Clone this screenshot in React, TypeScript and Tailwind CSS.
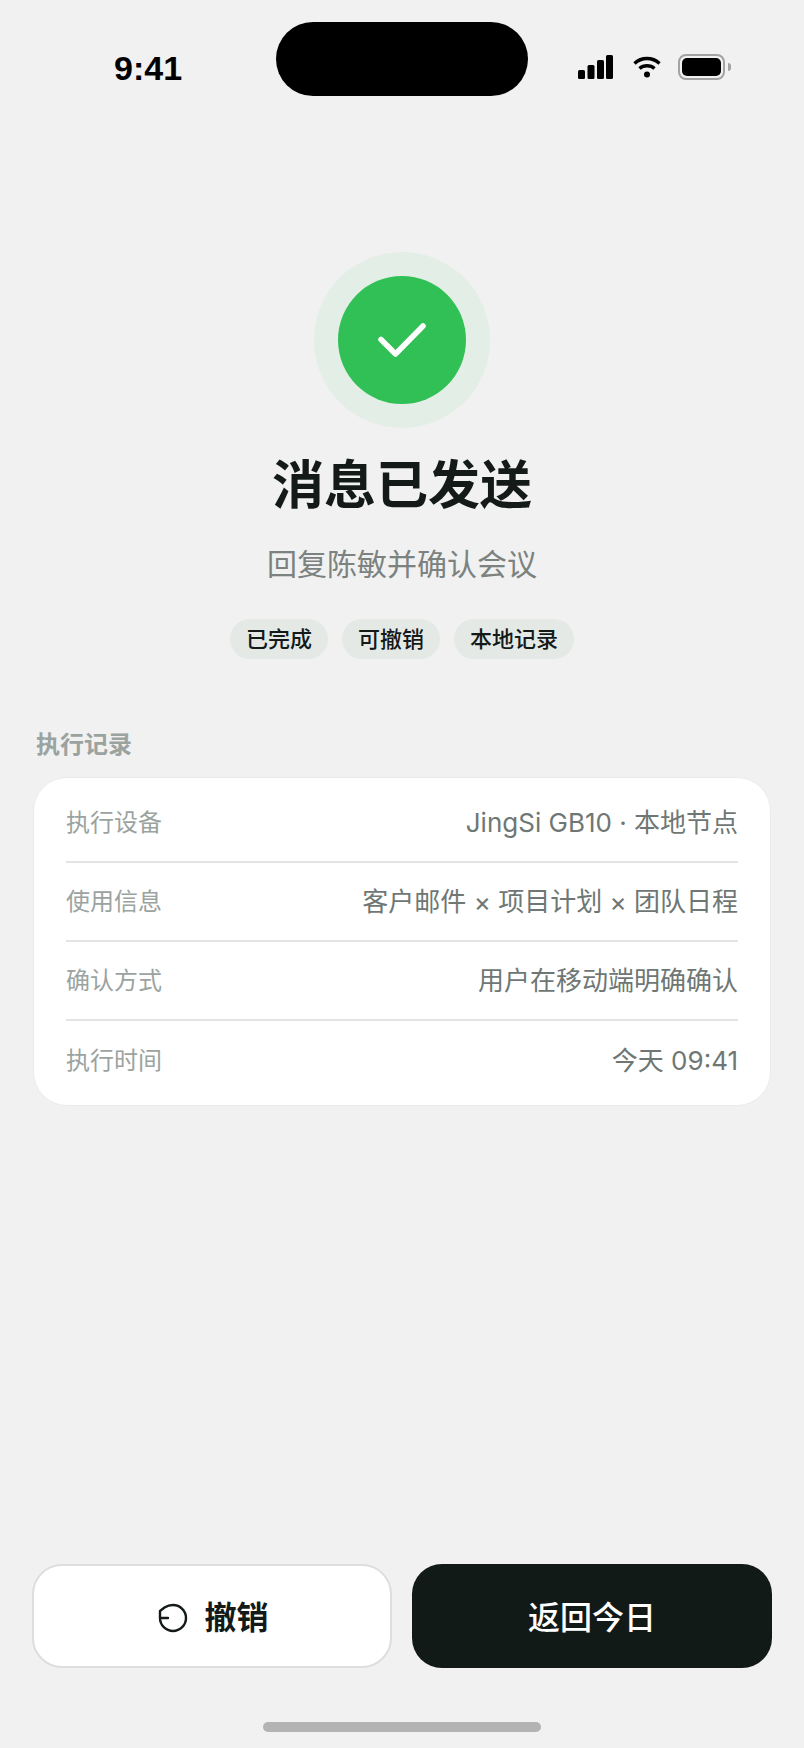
const FONT = "font-['Inter','Noto_Sans_CJK_SC',sans-serif]";

const rows = [
  { label: "执行设备", value: "JingSi GB10 · 本地节点" },
  { label: "使用信息", value: "客户邮件 × 项目计划 × 团队日程" },
  { label: "确认方式", value: "用户在移动端明确确认" },
  { label: "执行时间", value: "今天 09:41" },
];

function StatusIcons() {
  return (
    <div className="flex items-center">
      <svg width="35" height="24" viewBox="0 0 35 24" fill="#000">
        <rect x="0" y="15" width="7" height="9" rx="1.5" />
        <rect x="9.5" y="10" width="7" height="14" rx="1.5" />
        <rect x="19" y="5" width="7" height="19" rx="1.5" />
        <rect x="28" y="0" width="7" height="24" rx="1.5" />
      </svg>
      <svg className="ml-5" width="28" height="22" viewBox="0 0 28 22" fill="none" stroke="#000" strokeWidth="3.4">
        <path d="M1.5 7.5C8.5 .8 19.5 .8 26.5 7.5" />
        <path d="M6.5 12.5C10.5 8.8 17.5 8.8 21.5 12.5" />
        <circle cx="14" cy="18.5" r="3" fill="#000" stroke="none" />
      </svg>
      <div className="ml-[17px] flex items-center">
        <div className="flex h-[26px] w-[47px] rounded-[8px] border-2 border-[#a3a3a3] p-[2px]">
          <div className="flex-1 rounded-[5px] bg-black" />
        </div>
        <div className="ml-[3px] h-[8px] w-[3px] rounded-r-full bg-[#a3a3a3]" />
      </div>
    </div>
  );
}

function UndoIcon() {
  return (
    <svg width="30" height="30" viewBox="0 0 30 30" fill="none" stroke="#131a18" strokeWidth="2.4" strokeLinecap="round" strokeLinejoin="round">
      <path d="M2 15V8L6.5 4.5C9 2.9 12 2 15 2a13 13 0 1 1-13 13H10" />
    </svg>
  );
}

export default function App() {
  return (
    <div className={`${FONT} flex h-[1748px] w-[804px] flex-col overflow-hidden bg-[#f1f1f1] text-[#131a18]`}>
      <div className="flex h-[74px] mt-[22px] items-start">
        <div className="w-[276px] pl-[114px] pt-[26px] font-['Liberation_Sans',sans-serif] text-[34px] leading-[40px] font-bold text-black">9:41</div>
        <div className="h-[74px] w-[252px] rounded-[37px] bg-black" />
        <div className="pl-[50px] pt-[32px]">
          <StatusIcons />
        </div>
      </div>

      <div className="mt-[156px] flex flex-col items-center">
        <div className="flex h-[176px] w-[176px] items-center justify-center rounded-full bg-[#e3eee6]">
          <div className="flex h-[128px] w-[128px] items-center justify-center rounded-full bg-[#31c055]">
            <svg width="50" height="38" viewBox="0 0 50 38" fill="none" stroke="#fff" strokeWidth="5.5" strokeLinecap="round" strokeLinejoin="round">
              <path d="M4 18.5 18.5 33 46 5" />
            </svg>
          </div>
        </div>
        <h1 className="mt-[24px] text-[52px] leading-[68px] font-bold">消息已发送</h1>
        <p className="mt-[24px] text-[30px] leading-[40px] text-[#7b827f]">回复陈敏并确认会议</p>
        <div className="mt-[35px] flex gap-[14px]">
          {["已完成", "可撤销", "本地记录"].map((t) => (
            <span key={t} className="flex h-[40px] items-center rounded-full bg-[#e5e9e6] px-[16px] text-[22px] font-medium">
              {t}
            </span>
          ))}
        </div>
      </div>

      <div className="mx-[33px] mt-[70px]">
        <div className="pl-[3px] text-[24px] leading-[32px] font-semibold text-[#9ba3a0]">执行记录</div>
        <div className="mt-[16px] rounded-[34px] border border-[#ebebeb] bg-white px-[32px] pt-[6px] pb-[5px]">
          {rows.map((r, i) => (
            <div
              key={r.label}
              className={`flex h-[79px] items-center justify-between ${i < rows.length - 1 ? "border-b-2 border-[#e3e5e4]" : ""}`}
            >
              <span className="text-[24px] text-[#9ba3a0]">{r.label}</span>
              <span className="text-[26px] text-[#6f7774]">{r.value}</span>
            </div>
          ))}
        </div>
      </div>

      <div className="mt-auto ml-[32px] flex gap-[20px]">
        <button className="flex h-[104px] w-[360px] items-center justify-center gap-[16px] rounded-[30px] border-2 border-[#dedede] bg-white pt-[3px] pl-[3px] text-[32px] font-semibold">
          <UndoIcon />
          撤销
        </button>
        <button className="h-[104px] w-[360px] rounded-[30px] bg-[#121a18] pt-[3px] text-[32px] font-medium text-white">返回今日</button>
      </div>

      <div className="mt-[54px] mb-[16px] h-[10px] w-[278px] self-center rounded-full bg-[#b3b3b3]" />
    </div>
  );
}
